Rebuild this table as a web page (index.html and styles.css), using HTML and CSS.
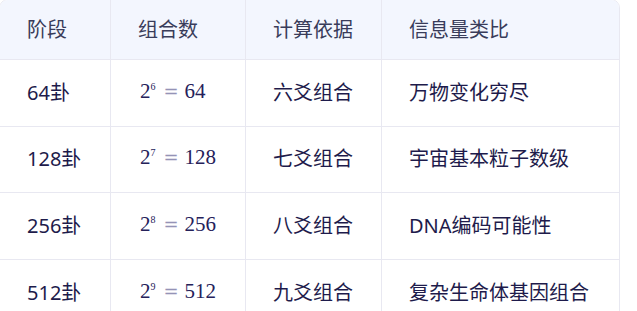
FILE: index.html
```html
<!DOCTYPE html>
<html lang="zh">
<head>
<meta charset="utf-8">
<link rel="stylesheet" href="styles.css">
</head>
<body>
<div class="table-wrap">
  <table class="gua-table">
    <colgroup>
      <col class="c1"><col class="c2"><col class="c3"><col class="c4">
    </colgroup>
    <thead>
      <tr><th>阶段</th><th>组合数</th><th>计算依据</th><th>信息量类比</th></tr>
    </thead>
    <tbody>
      <tr><td>64卦</td><td><span class="math">2<sup>6</sup><span class="eq">=</span>64</span></td><td>六爻组合</td><td>万物变化穷尽</td></tr>
      <tr><td>128卦</td><td><span class="math">2<sup>7</sup><span class="eq">=</span>128</span></td><td>七爻组合</td><td>宇宙基本粒子数级</td></tr>
      <tr><td>256卦</td><td><span class="math">2<sup>8</sup><span class="eq">=</span>256</span></td><td>八爻组合</td><td>DNA编码可能性</td></tr>
      <tr><td>512卦</td><td><span class="math">2<sup>9</sup><span class="eq">=</span>512</span></td><td>九爻组合</td><td>复杂生命体基因组合</td></tr>
    </tbody>
  </table>
</div>
</body>
</html>
```
FILE: styles.css
```css
html, body {
  margin: 0;
  padding: 0;
  background: #ffffff;
  overflow: hidden;
}
body {
  font-family: "Noto Sans", "Noto Sans CJK SC", sans-serif;
  font-size: 20px;
  color: #1e1b4b;
}
.table-wrap {
  margin: -1px 0 0 -1px;
  width: 621px;
  border: 1px solid #e8e8f1;
  border-radius: 9px;
  overflow: hidden;
  box-sizing: border-box;
}
.gua-table {
  border-collapse: separate;
  border-spacing: 0;
  table-layout: fixed;
  width: 619px;
}
.c1 { width: 111px; }
.c2 { width: 135px; }
.c3 { width: 136px; }
.c4 { width: 237px; }
.gua-table th,
.gua-table td {
  box-sizing: border-box;
  text-align: left;
  padding: 0 0 0 27px;
  border-right: 1px solid #e8e8f1;
  border-bottom: 1px solid #e8e8f1;
  white-space: nowrap;
  line-height: 32px;
}
.gua-table th:last-child,
.gua-table td:last-child {
  border-right: none;
}
.gua-table th {
  height: 60px;
  background: #f3f6fe;
  font-weight: 400;
  color: #393c5a;
}
.gua-table td {
  height: 66.67px;
}
.math {
  font-family: "Liberation Serif", "DejaVu Serif", serif;
  font-size: 21px;
  color: #25215a;
  margin-left: 2px;
}
.math sup {
  font-size: 10px;
  vertical-align: 0;
  position: relative;
  top: -8px;
  margin-left: 0;
}
.eq {
  font-family: "DejaVu Serif", serif;
  font-size: 18px;
  color: #9593b6;
  margin: 0 6px 0 8px;
}
```
